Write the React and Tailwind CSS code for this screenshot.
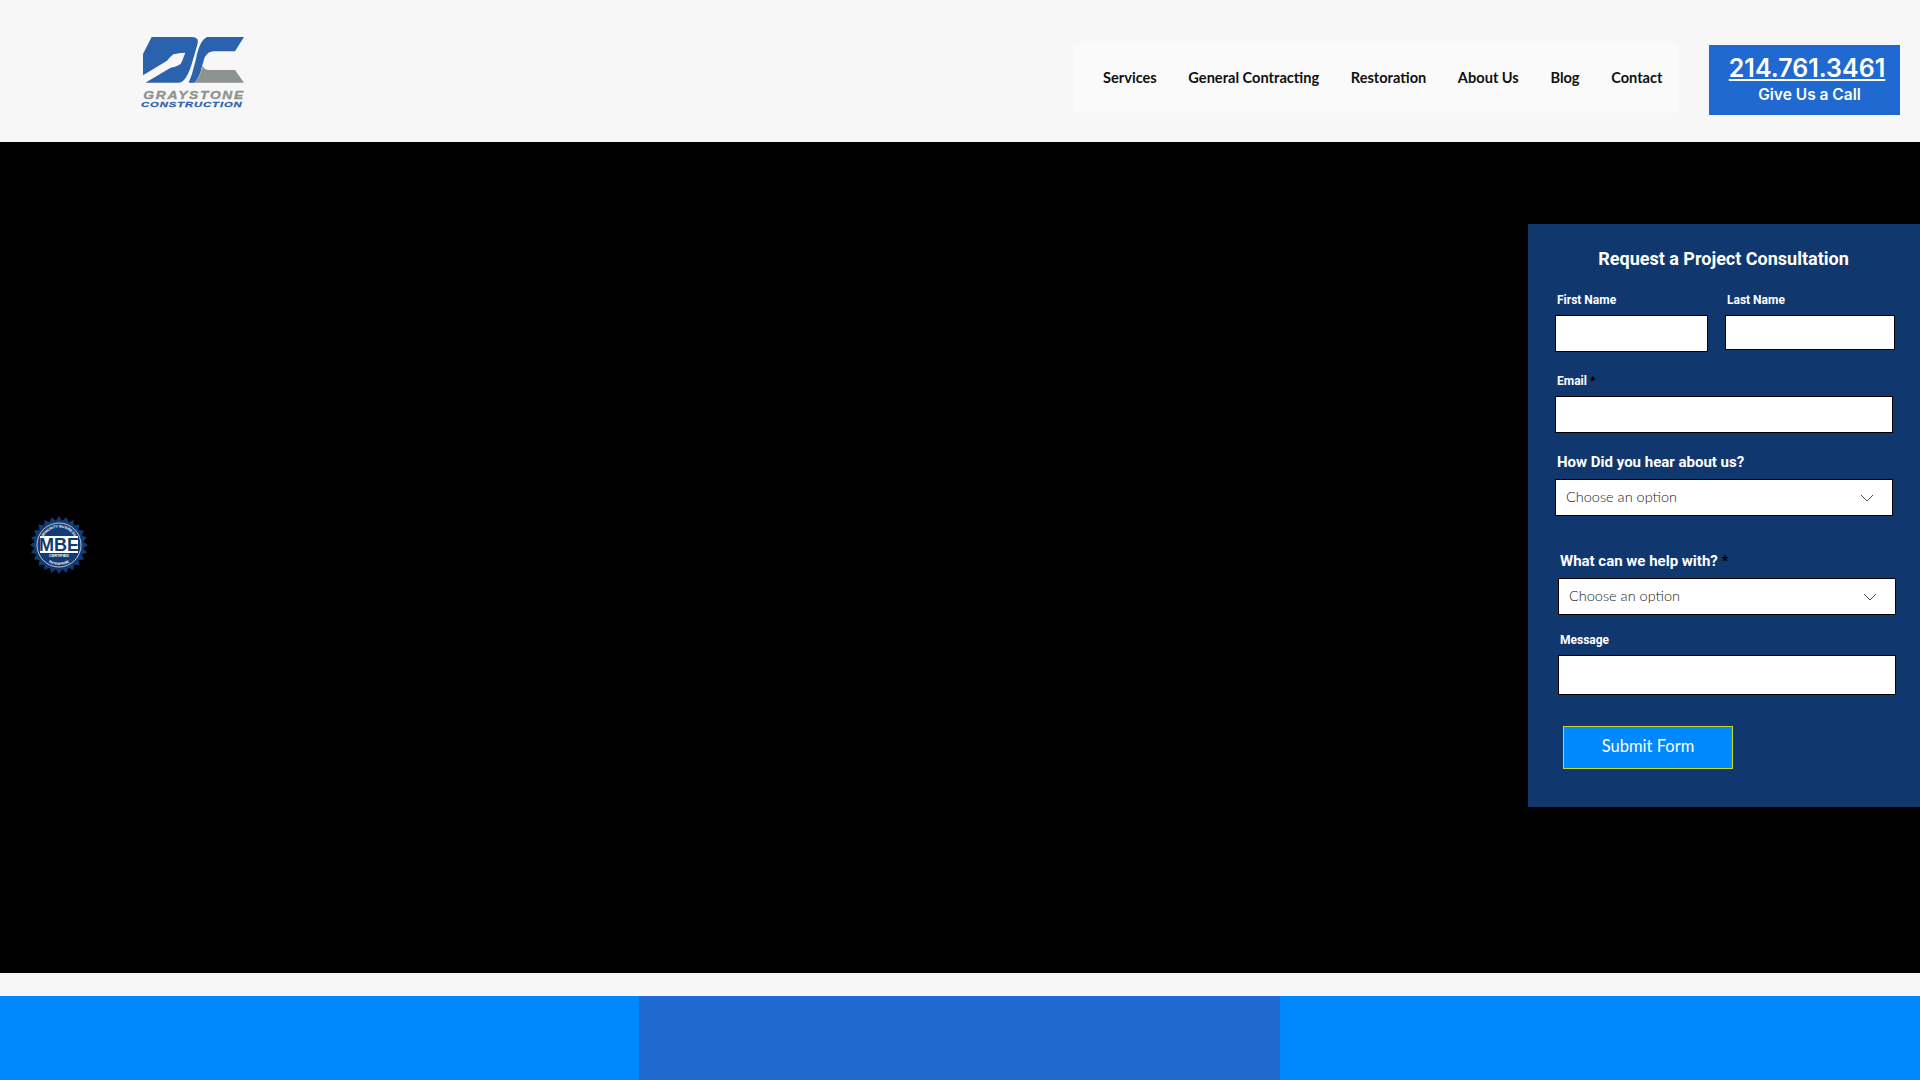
import React from 'react';

const navLinks = ['Services', 'General Contracting', 'Restoration', 'About Us', 'Blog', 'Contact'];

const Logo = () => (
    <svg className="block overflow-visible" width="104" height="72" viewBox="0 0 312 216">
        {/* P half of the mark */}
        <g transform="translate(-3,-6)" fill="#2b62ad">
            <path d="M35 9 H155 Q180 9 172 32 L158 80 Q140 146 115 146 H16 L92 101 Q122 97 126 82 L136 56 Q112 57 105 60 H9 Z" />
            <path d="M9 60 H101 Q90 68 81 80 L9 124 Z" />
        </g>
        {/* C half of the mark */}
        <g transform="translate(153,-6)">
            <path fill="#2b62ad" d="M45 9 H156 L129 52 H65 Q48 52 38 70 L30 97 Q25 125 8 146 H-10 L0 120 L12 75 Q22 20 45 9 Z" />
            <path fill="#8e9390" d="M32 95 Q38 108 50 108 H129 L156 146 H8 Q25 125 32 95 Z" />
        </g>
        <text x="7" y="190" textLength="305" lengthAdjust="spacingAndGlyphs" letterSpacing="4" fontFamily="Liberation Sans, sans-serif" fontSize="33" fontWeight="700" fontStyle="italic" fill="#8e9390" stroke="#8e9390" strokeWidth="1">GRAYSTONE</text>
        <text x="0" y="214" textLength="305" lengthAdjust="spacingAndGlyphs" letterSpacing="2" fontFamily="Liberation Sans, sans-serif" fontSize="24" fontWeight="700" fontStyle="italic" fill="#2b62ad" stroke="#2b62ad" strokeWidth="0.8">CONSTRUCTION</text>
    </svg>
);

const mbePoints = () => {
    const pts = [];
    for (let i = 0; i < 48; i++) {
        const r = i % 2 === 0 ? 29 : 24.5;
        const a = (i / 48) * Math.PI * 2;
        pts.push(`${(30 + r * Math.cos(a)).toFixed(2)},${(30 + r * Math.sin(a)).toFixed(2)}`);
    }
    return pts.join(' ');
};

const MbeBadge = () => (
    <svg className="block" width="60" height="60" viewBox="0 0 60 60">
        <polygon points={mbePoints()} fill="#123a73" />
        <circle cx="30" cy="30" r="22" fill="none" stroke="#ffffff" strokeWidth="0.7" />
        <defs>
            <path id="mbeTop" d="M12.5 30 A17.5 17.5 0 0 1 47.5 30" />
            <path id="mbeBottom" d="M10 30 A20 20 0 0 0 50 30" />
        </defs>
        <text fontFamily="Liberation Sans, sans-serif" fontSize="3.6" fontWeight="700" fill="#ffffff">
            <textPath href="#mbeTop" startOffset="50%" textAnchor="middle">MINORITY BUSINESS</textPath>
        </text>
        <text fontFamily="Liberation Sans, sans-serif" fontSize="3.4" fontWeight="700" fill="#ffffff">
            <textPath href="#mbeBottom" startOffset="50%" textAnchor="middle">ENTERPRISE</textPath>
        </text>
        <rect x="11" y="21" width="38" height="17" fill="#ffffff" />
        <text x="30" y="36" textAnchor="middle" fontFamily="Liberation Sans, sans-serif" fontSize="18" fontWeight="700" fill="#123a73">MBE</text>
        <text x="30" y="42" textAnchor="middle" fontFamily="Liberation Sans, sans-serif" fontSize="3.8" fontWeight="700" fill="#ffffff">CERTIFIED</text>
    </svg>
);

const Chevron = () => (
    <svg width="14" height="8" viewBox="0 0 14 8" fill="none" stroke="#555555" strokeWidth="1">
        <path d="M1 1 L7 7 L13 1" />
    </svg>
);

const FieldLabel = ({ children, className = '' }) => (
    <label className={`block font-['Roboto',sans-serif] font-bold text-white ${className}`}>{children}</label>
);

const TextField = ({ className = '' }) => (
    <input type="text" className={`block bg-white border border-black outline-none ${className}`} />
);

const SelectField = ({ className = '' }) => (
    <div className={`flex items-center justify-between bg-white border border-black pl-[10px] pr-[18px] h-[37px] w-[338px] ${className}`}>
        <span className="font-['Lato',sans-serif] font-light text-[14.5px] leading-[20px] -mt-[1px] text-[#1a1a1a]">Choose an option</span>
        <Chevron />
    </div>
);

const ConsultationForm = () => (
    <form className="w-[392px] h-[583px] ml-auto bg-[#11376f] pt-[23px]">
        <h2 className="font-['Roboto',sans-serif] font-bold text-[18px] leading-[24px] text-white text-center -ml-[1px]">Request a Project Consultation</h2>

        <div className="flex items-start mt-[21px] pl-[27px]">
            <div className="w-[153px]">
                <FieldLabel className="ml-[2px] text-[12px] leading-[16px]">First Name</FieldLabel>
                <TextField className="mt-[7px] w-[153px] h-[37px]" />
            </div>
            <div className="ml-[17px] w-[170px]">
                <FieldLabel className="ml-[2px] text-[12px] leading-[16px]">Last Name</FieldLabel>
                <TextField className="mt-[7px] w-[170px] h-[35px]" />
            </div>
        </div>

        <div className="mt-[21px] pl-[27px]">
            <FieldLabel className="ml-[2px] text-[12px] leading-[16px]">Email <span className="text-black">*</span></FieldLabel>
            <TextField className="mt-[7px] w-[338px] h-[37px]" />
        </div>

        <div className="mt-[19px] pl-[27px]">
            <FieldLabel className="ml-[2px] text-[15px] leading-[20px]">How Did you hear about us?</FieldLabel>
            <SelectField className="mt-[7px]" />
        </div>

        <div className="mt-[35px] pl-[30px]">
            <FieldLabel className="ml-[2px] text-[15px] leading-[20px]">What can we help with? <span className="text-black">*</span></FieldLabel>
            <SelectField className="mt-[7px]" />
        </div>

        <div className="mt-[17px] pl-[30px]">
            <FieldLabel className="ml-[2px] text-[12px] leading-[16px]">Message</FieldLabel>
            <TextField className="mt-[7px] w-[338px] h-[40px]" />
        </div>

        <div className="mt-[31px] pl-[35px]">
            <button type="button" className="block w-[170px] h-[43px] pb-[3px] bg-[#0088ff] border border-[#c8d92e] font-['Lato',sans-serif] font-normal text-[16.5px] text-white text-center">
                Submit Form
            </button>
        </div>
    </form>
);

export default function App() {
    return (
        <div className="w-full h-[1080px] overflow-hidden bg-[#f7f7f7]">
            {/* Header */}
            <header className="flex items-start h-[142px]">
                <div className="ml-[141px] mt-[36px]">
                    <Logo />
                </div>
                <nav className="ml-auto mt-[43px] h-[70px] w-[604px] flex items-center gap-[31.6px] pl-[30px] bg-[#fafafa] font-['Lato',sans-serif] font-bold text-[14.6px] text-[#111111]">
                    {navLinks.map((link) => (
                        <a key={link} href="#" className="whitespace-nowrap">{link}</a>
                    ))}
                </nav>
                <div className="ml-[32px] mr-[20px] mt-[45px] w-[191px] h-[70px] bg-[#1f69d1] text-white font-['Inter',sans-serif] flex flex-col items-center">
                    <a href="#" className="mt-[8px] ml-[5px] text-[25px] leading-[31px] font-semibold underline decoration-2 underline-offset-2">214.761.3461</a>
                    <span className="text-[15.5px] leading-[22px] font-semibold ml-[10px]">Give Us a Call</span>
                </div>
            </header>

            {/* Hero */}
            <section className="flex items-start h-[831px] bg-black pt-[82px]">
                <div className="ml-[29px] mt-[291px]">
                    <MbeBadge />
                </div>
                <ConsultationForm />
            </section>

            {/* Footer bands */}
            <div className="grid grid-cols-[639px_641px_1fr] h-[84px] mt-[23px]">
                <div className="bg-[#0088ff]" />
                <div className="bg-[#1f69d1]" />
                <div className="bg-[#0088ff]" />
            </div>
        </div>
    );
}
